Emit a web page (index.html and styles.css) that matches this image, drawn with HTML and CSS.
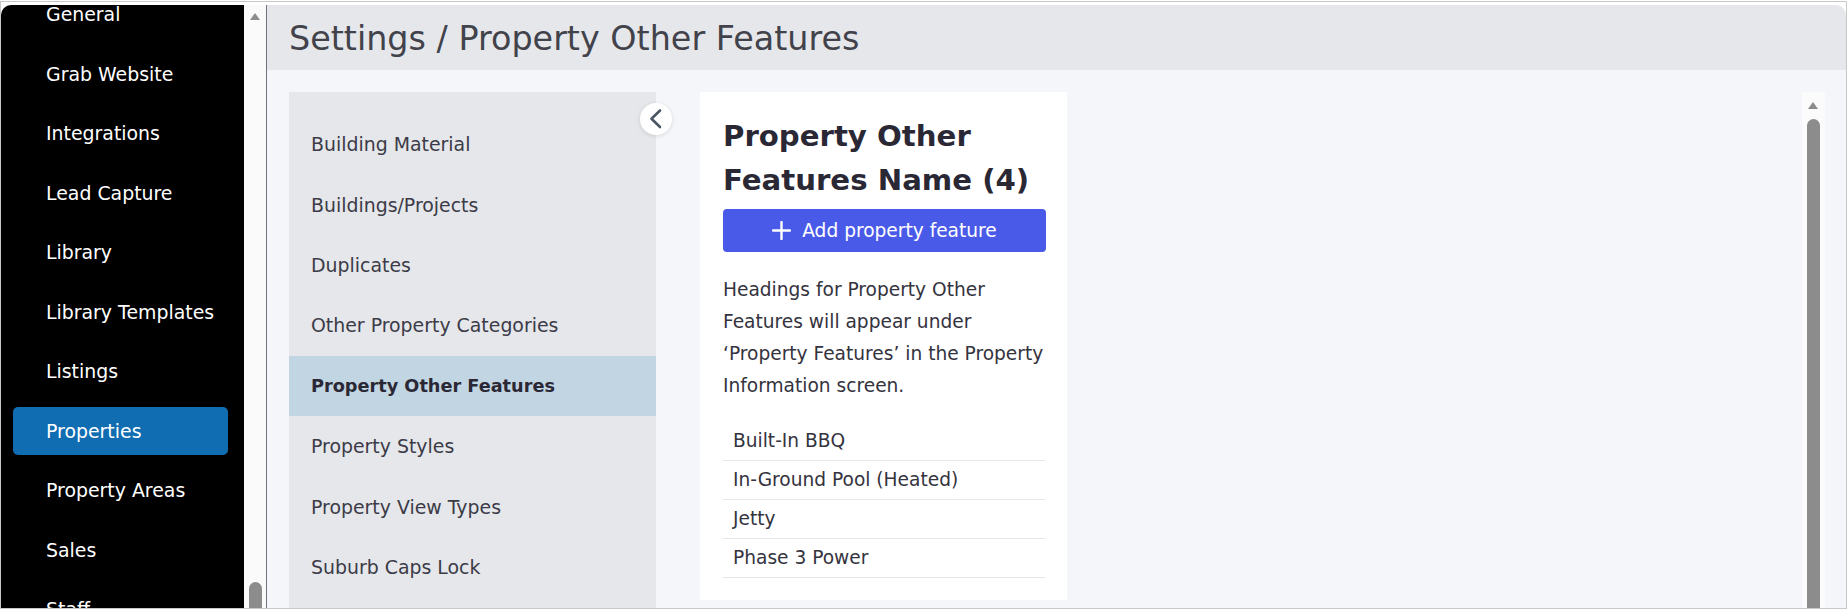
FILE: index.html
```html
<!DOCTYPE html>
<html lang="en">
<head>
<meta charset="UTF-8">
<meta name="viewport" content="width=device-width, initial-scale=1.0">
<title>Settings / Property Other Features</title>
<link rel="stylesheet" href="styles.css">
</head>
<body>
<div class="screen">
  <div class="app">
    <aside class="side">
      <nav class="side-nav">
        <a class="side-item">General</a>
        <a class="side-item">Grab Website</a>
        <a class="side-item">Integrations</a>
        <a class="side-item">Lead Capture</a>
        <a class="side-item">Library</a>
        <a class="side-item">Library Templates</a>
        <a class="side-item">Listings</a>
        <a class="side-item active">Properties</a>
        <a class="side-item">Property Areas</a>
        <a class="side-item">Sales</a>
        <a class="side-item">Staff</a>
      </nav>
      <div class="side-scroll">
        <span class="arrow-up"></span>
        <span class="side-thumb"></span>
      </div>
    </aside>

    <main class="main">
      <header class="top">
        <h1>Settings / Property Other Features</h1>
      </header>

      <div class="body">
        <div class="sub">
          <ul class="sub-list">
            <li>Building Material</li>
            <li>Buildings/Projects</li>
            <li>Duplicates</li>
            <li>Other Property Categories</li>
            <li class="active">Property Other Features</li>
            <li>Property Styles</li>
            <li>Property View Types</li>
            <li>Suburb Caps Lock</li>
          </ul>
          <button class="collapse" title="Collapse">
            <svg width="32" height="32" viewBox="0 0 32 32"><path d="M20 7.5 L11.5 15.75 L20 24" fill="none" stroke="#4b5563" stroke-width="2.6" stroke-linecap="round" stroke-linejoin="round"/></svg>
          </button>
        </div>

        <section class="card">
          <h2>Property Other Features Name (4)</h2>
          <button class="add">
            <svg width="19" height="19" viewBox="0 0 19 19"><path d="M9.5 1 V18 M1 9.5 H18" stroke="#fff" stroke-width="2.4" stroke-linecap="round"/></svg>
            Add property feature
          </button>
          <p class="note">Headings for Property Other Features will appear under ‘Property Features’ in the Property Information screen.</p>
          <ul class="features">
            <li>Built-In BBQ</li>
            <li>In-Ground Pool (Heated)</li>
            <li>Jetty</li>
            <li>Phase 3 Power</li>
          </ul>
        </section>

        <div class="vscroll">
          <span class="arrow-up"></span>
          <span class="thumb"></span>
        </div>
      </div>
    </main>
  </div>
</div>
</body>
</html>
```

FILE: styles.css
```css
*{box-sizing:border-box;margin:0;padding:0}
html,body{height:100%;background:#fff;overflow:hidden}
body{padding-top:1px;font-family:"DejaVu Sans","Liberation Sans",sans-serif;color:#3c3b47}

.screen{height:608px;border:1px solid #c8c8c8;padding-top:3px;background:#fff}
.app{display:flex;height:100%;border-radius:10px 10px 0 0;overflow:hidden}

/* left navigation */
.side{display:flex;width:266px;flex:none;border-right:1px solid #6b7280}
.side-nav{width:243px;background:#000;overflow:hidden;padding:0 16px 0 12px}
.side-item{display:flex;align-items:center;height:48px;margin-top:-15px;padding-left:33px;margin-bottom:11.5px;border-radius:5px;color:#fff;font-size:18.9px;white-space:nowrap}
.side-item + .side-item{margin-top:0}
.side-item.active{background:#106db1}
.side-scroll{position:relative;flex:1;background:#fafafa}
.side-scroll .arrow-up{position:absolute;left:6px;top:8px}
.side-thumb{position:absolute;left:5px;right:4px;top:577px;bottom:0;background:#8c8c8c;border-radius:7px 7px 0 0}
.arrow-up{width:0;height:0;border-left:5.5px solid transparent;border-right:5.5px solid transparent;border-bottom:7px solid #8c8c8c}

/* main area */
.main{flex:1;display:flex;flex-direction:column;background:#f5f6fa;min-width:0}
.top{height:65px;flex:none;background:#e5e7eb;display:flex;align-items:center;padding-left:22px}
.top h1{font-weight:400;font-size:33.4px;color:#42424b;margin-top:2px}

.body{flex:1;display:flex;align-items:flex-start;gap:44px;padding:22px 0 0 22px;min-height:0}

.sub{position:relative;width:367px;flex:none;align-self:stretch;background:#e5e7eb}
.sub-list{list-style:none;padding-top:22px}
.sub-list li{height:60.4px;display:flex;align-items:center;padding-left:22px;font-size:18.9px;color:#3c3b47}
.sub-list li.active{background:#c2d5e2;font-weight:700;color:#2b2836;font-size:17.7px}
.collapse{position:absolute;top:11px;right:-16px;width:32px;height:32px;border:none;border-radius:50%;background:#fff;box-shadow:0 1px 5px rgba(0,0,0,.12);display:flex}

.card{width:367px;flex:none;background:#fff;padding:23px 22px 22px 23px}
.card h2{font-size:29.2px;line-height:43.6px;font-weight:700;color:#2b2836}
.add{margin-top:7px;width:323px;height:43px;border:none;border-radius:4px;background:#4a5ae8;color:#fff;font:inherit;font-size:18.6px;display:flex;align-items:center;justify-content:center;gap:11px}
.note{margin-top:21.5px;font-size:18.6px;line-height:32.2px;color:#34333e}
.features{list-style:none;margin-top:19px}
.features li{height:39px;display:flex;align-items:center;padding-left:10px;border-bottom:1px solid #e5e7eb;font-size:18.6px;color:#34333e}

.vscroll{position:relative;margin-left:auto;margin-right:21px;width:23px;align-self:stretch;background:#fbfbfc}
.vscroll .arrow-up{position:absolute;left:6px;top:10px}
.vscroll .thumb{position:absolute;left:5px;width:13px;top:27px;bottom:0;background:#8c8c8c;border-radius:7px 7px 0 0}
```
